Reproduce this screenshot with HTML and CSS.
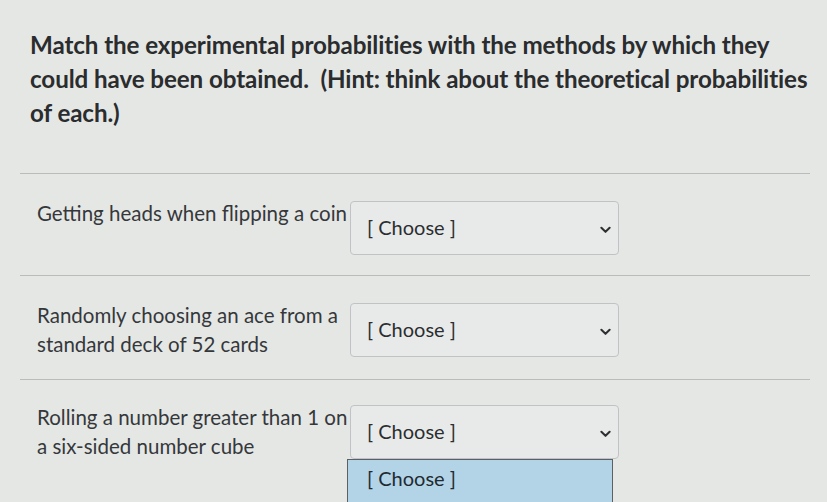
FILE: index.html
```html
<!DOCTYPE html>
<html>
<head>
<meta charset="utf-8">
<link rel="stylesheet" href="styles.css">
</head>
<body>
<div class="page">
  <p class="question">Match the experimental probabilities with the methods by which they could have been obtained. &nbsp;(Hint: think about the theoretical probabilities of each.)</p>
  <div class="rows">
    <div class="row">
      <div class="label">Getting heads when flipping a coin</div>
      <div class="select"><span>[ Choose ]</span>
        <svg class="chev" viewBox="0 0 12 8" width="11" height="8"><path d="M1.5 1.5 L6 6 L10.5 1.5" fill="none" stroke="#2d2f31" stroke-width="2.2" stroke-linecap="round" stroke-linejoin="round"/></svg>
      </div>
    </div>
    <div class="row">
      <div class="label">Randomly choosing an ace from a standard deck of 52 cards</div>
      <div class="select"><span>[ Choose ]</span>
        <svg class="chev" viewBox="0 0 12 8" width="11" height="8"><path d="M1.5 1.5 L6 6 L10.5 1.5" fill="none" stroke="#2d2f31" stroke-width="2.2" stroke-linecap="round" stroke-linejoin="round"/></svg>
      </div>
    </div>
    <div class="row last">
      <div class="label">Rolling a number greater than 1 on a six-sided number cube</div>
      <div class="select-wrap">
        <div class="select"><span>[ Choose ]</span>
          <svg class="chev" viewBox="0 0 12 8" width="11" height="8"><path d="M1.5 1.5 L6 6 L10.5 1.5" fill="none" stroke="#2d2f31" stroke-width="2.2" stroke-linecap="round" stroke-linejoin="round"/></svg>
        </div>
        <div class="dropdown"><div class="option">[ Choose ]</div></div>
      </div>
    </div>
  </div>
</div>
</body>
</html>
```
FILE: styles.css
```css
html, body {
  margin: 0;
  padding: 0;
  background: #e5e7e5;
  height: 100%;
  overflow: hidden;
}
.page {
  padding: 28px 0 0 20px;
  width: 790px;
  font-family: Lato, "Open Sans", sans-serif;
  color: #2b2e31;
}
.question {
  margin: 0 0 0 10px;
  width: 790px;
  font-weight: 700;
  font-size: 24.2px;
  line-height: 34px;
  letter-spacing: -0.1px;
  color: #2a2c2e;
}
.rows {
  margin-top: 43px;
  border-top: 1px solid #b9bcbd;
}
.row {
  display: flex;
  align-items: flex-start;
  padding: 27px 0 20px 17px;
  border-bottom: 1px solid #b9bcbd;
}
.row.last {
  border-bottom: none;
  padding-top: 25px;
}
.label {
  width: 313px;
  font-size: 20.5px;
  line-height: 29px;
  color: #35383b;
  margin-top: -2px;
}
.select-wrap {
  position: relative;
}
.select {
  width: 269px;
  height: 54px;
  box-sizing: border-box;
  border: 1px solid #bfc3c5;
  border-radius: 4px;
  background: #e8eae9;
  display: flex;
  align-items: center;
  justify-content: space-between;
  padding: 0 7px 0 16px;
  font-size: 20px;
  color: #2b2e31;
}
.select span {
  margin-top: -2px;
}
.chev {
  margin-top: 4px;
}
.dropdown {
  position: absolute;
  left: -3px;
  top: 54px;
  width: 266px;
  height: 60px;
  box-sizing: border-box;
  border: 1px solid #5c6064;
  background: #b3d3e7;
}
.option {
  padding: 6px 0 0 19px;
  font-size: 20px;
  color: #222a31;
}
```
